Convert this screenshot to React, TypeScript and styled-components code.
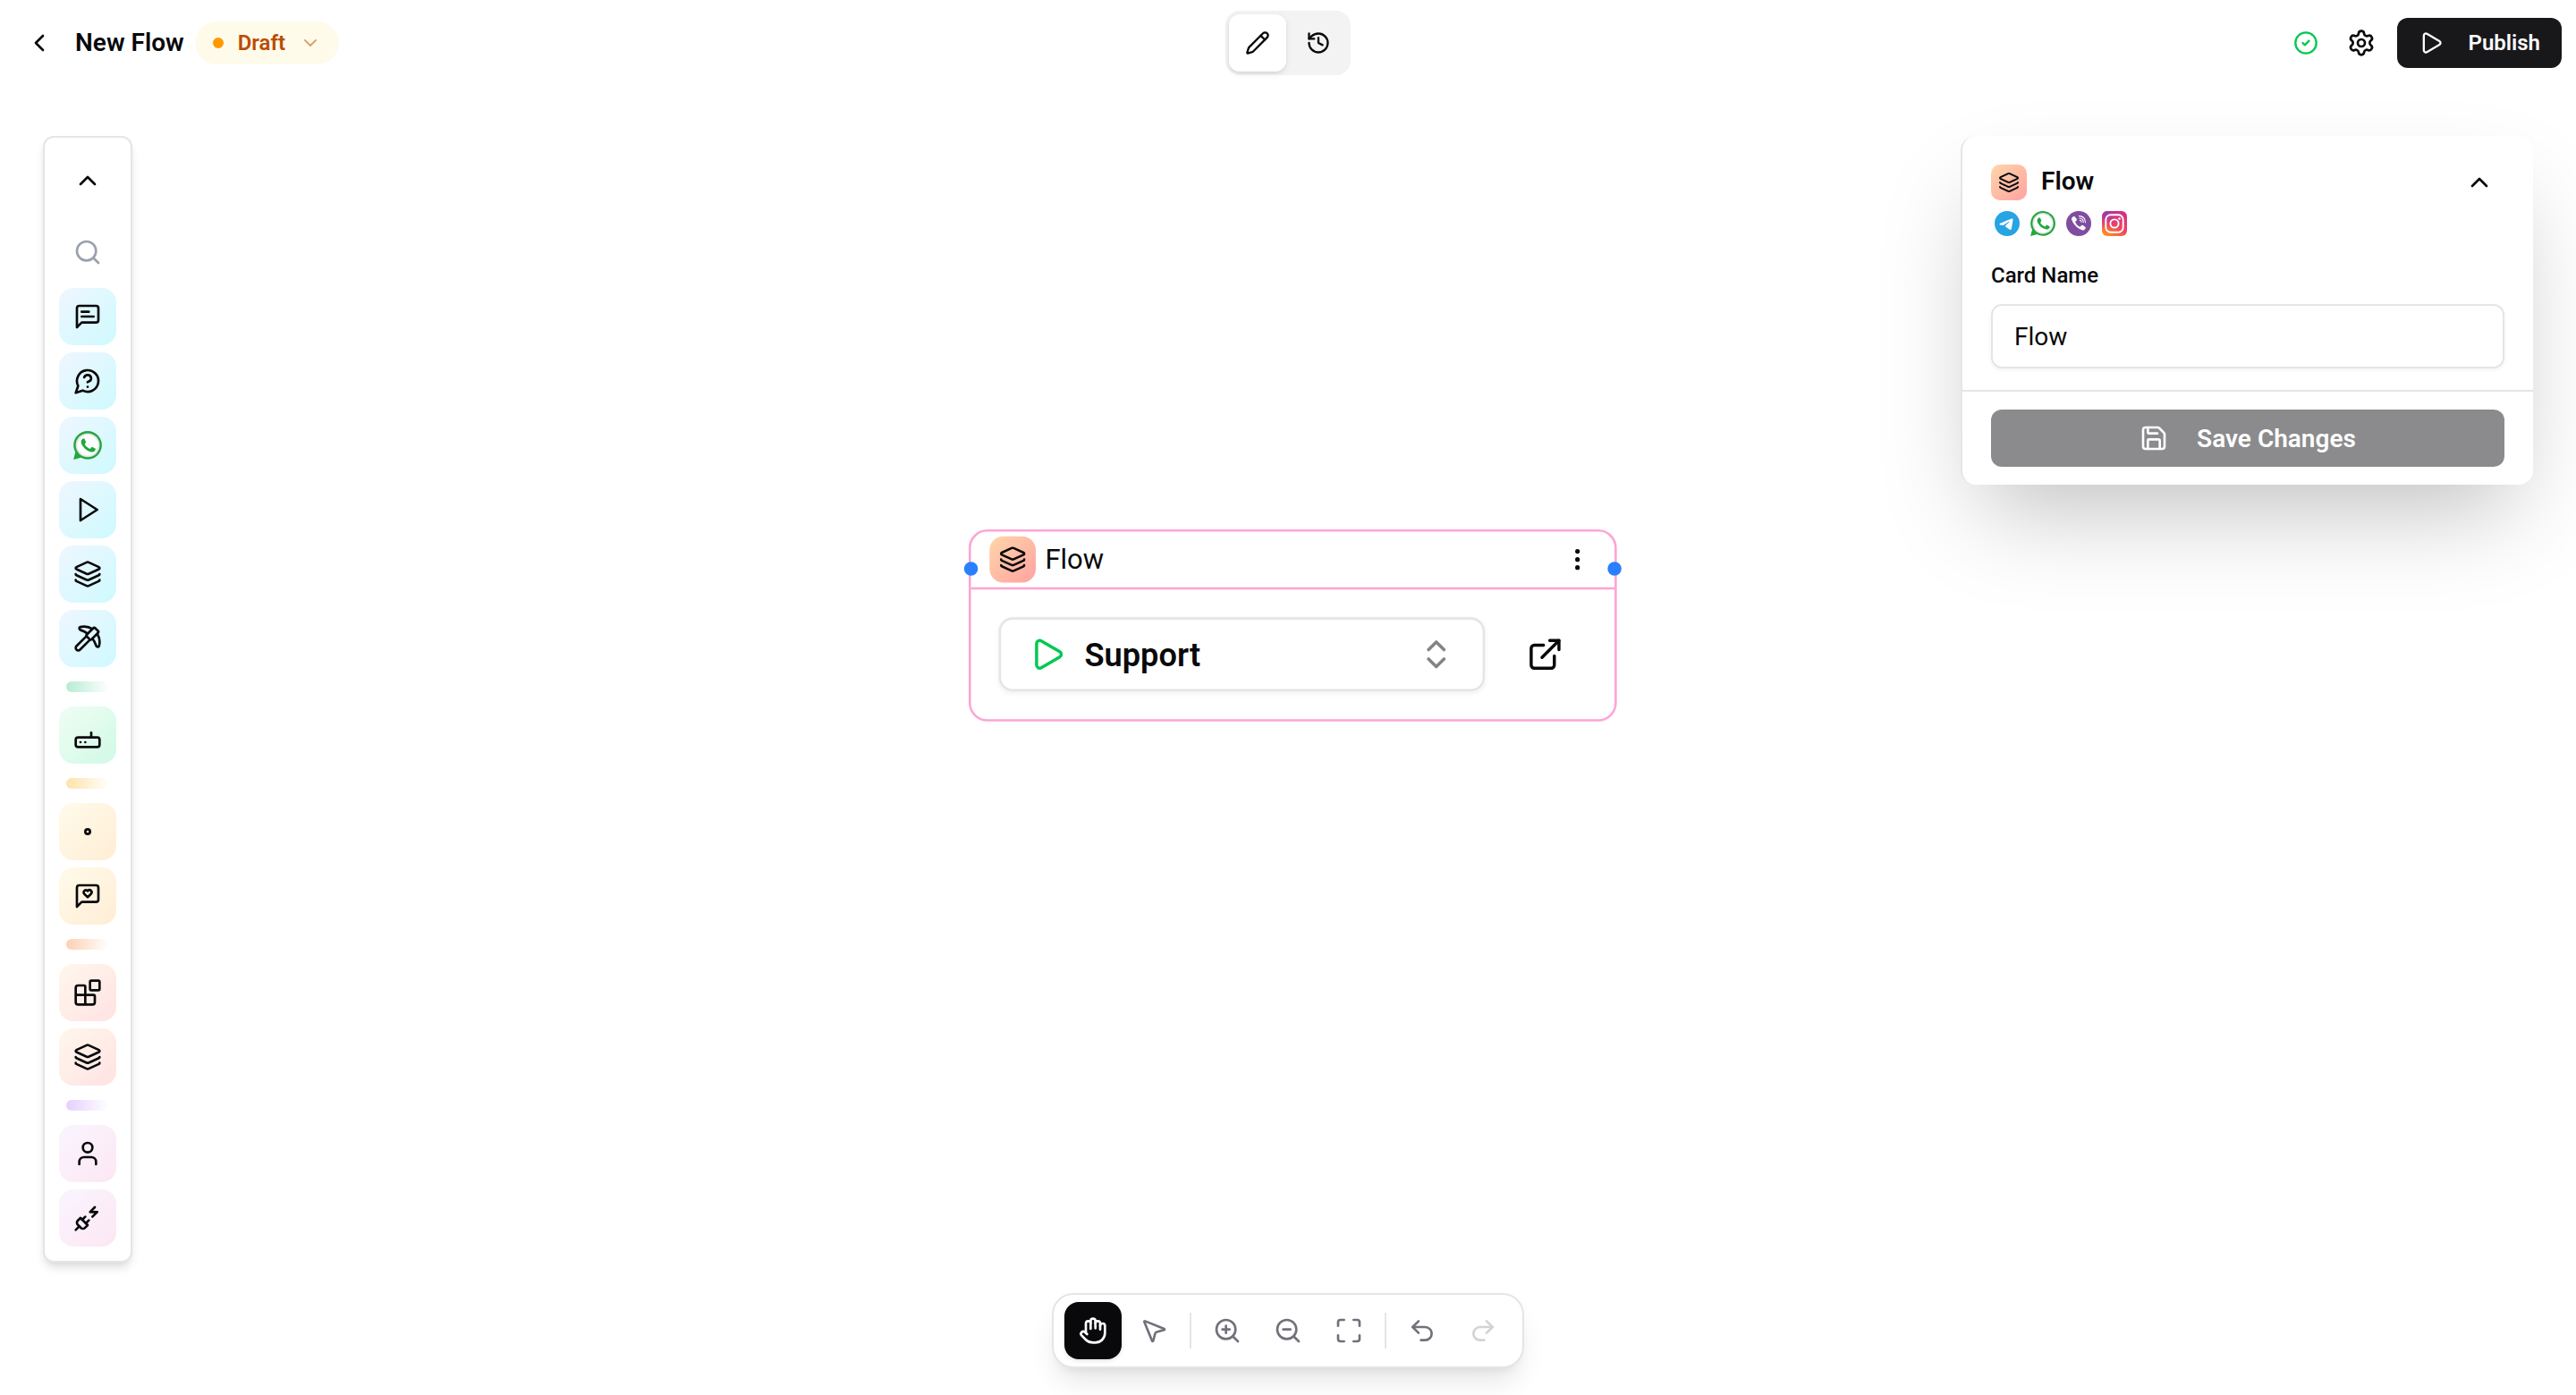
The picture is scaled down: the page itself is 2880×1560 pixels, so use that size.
import {
  Blocks,
  ChevronDown,
  ChevronLeft,
  ChevronUp,
  ChevronsUpDown,
  CircleCheck,
  EllipsisVertical,
  ExternalLink,
  Hand,
  History,
  Layers,
  Maximize,
  MousePointer2,
  Pencil,
  Pickaxe,
  Play,
  PlugZap,
  Redo2,
  Save,
  Search,
  Settings,
  Undo2,
  User,
  ZoomIn,
  ZoomOut,
} from 'lucide-react';
import { FC, ReactNode } from 'react';
import styled, { createGlobalStyle } from 'styled-components';

const GlobalStyle = createGlobalStyle`
  *, *::before, *::after {
    box-sizing: border-box;
  }

  body {
    margin: 0;
    background: #fff;
    color: #09090b;
    font-family: Roboto, 'Liberation Sans', sans-serif;
  }

  button, input {
    font: inherit;
    color: inherit;
    border: 0;
    padding: 0;
    background: none;
  }

  svg {
    display: block;
    flex-shrink: 0;
  }
`;

interface IGlyphProps {
  size?: number;
  children?: ReactNode;
}

const Glyph: FC<IGlyphProps> = ({ size = 32, children }) => (
  <svg
    width={size}
    height={size}
    viewBox="0 0 24 24"
    fill="none"
    stroke="currentColor"
    strokeWidth="2"
    strokeLinecap="round"
    strokeLinejoin="round"
  >
    {children}
  </svg>
);

const MessageText = () => (
  <Glyph>
    <path d="M21 15a2 2 0 0 1-2 2H7l-4 4V5a2 2 0 0 1 2-2h14a2 2 0 0 1 2 2z" />
    <path d="M13 8H7" />
    <path d="M17 12H7" />
  </Glyph>
);

const MessageQuestion = () => (
  <Glyph>
    <path d="M7.9 20A9 9 0 1 0 4 16.1L2 22Z" />
    <path d="M9.09 9a3 3 0 0 1 5.83 1c0 2-3 3-3 3" />
    <path d="M12 17h.01" />
  </Glyph>
);

const MessageHeart = () => (
  <Glyph>
    <path d="M21 15a2 2 0 0 1-2 2H7l-4 4V5a2 2 0 0 1 2-2h14a2 2 0 0 1 2 2z" />
    <path d="M14.8 7.5a1.84 1.84 0 0 0-2.6 0l-.2.3-.3-.3a1.84 1.84 0 1 0-2.4 2.8L12 13l2.7-2.7c.9-.9.8-2.1.1-2.8" />
  </Glyph>
);

const Triangle = () => (
  <Glyph>
    <polygon points="6 3 20 12 6 21 6 3" />
  </Glyph>
);

const Router = () => (
  <Glyph>
    <rect width="20" height="8" x="2" y="14" rx="2" />
    <path d="M6.01 18H6" />
    <path d="M10.01 18H10" />
    <path d="M15 10v4" />
  </Glyph>
);

const SmallDot = () => (
  <Glyph>
    <circle cx="12" cy="12" r="2" />
  </Glyph>
);

const WhatsApp: FC<{ size: number }> = ({ size }) => (
  <svg width={size} height={size} viewBox="0 0 24 24">
    <defs>
      <radialGradient id={`wa-${size}`}>
        <stop offset="0.8" stopColor="#fff" />
        <stop offset="1" stopColor="#d4d4d4" />
      </radialGradient>
    </defs>
    <path
      fill="#20a83c"
      d="M.057 24l1.687-6.163C.703 16.033.156 13.988.157 11.891.16 5.335 5.495 0 12.05 0c3.181.001 6.167 1.24 8.413 3.488 2.245 2.248 3.481 5.236 3.48 8.414-.003 6.557-5.338 11.892-11.893 11.892-1.99-.001-3.951-.5-5.688-1.448z"
    />
    <circle cx="12.05" cy="11.9" r="10.1" fill={`url(#wa-${size})`} />
    <path
      fill="#20a83c"
      d="M17.972 14.382c-.297-.149-1.758-.867-2.03-.967-.273-.099-.471-.148-.67.15-.197.297-.767.966-.94 1.164-.173.199-.347.223-.644.075-.297-.15-1.255-.463-2.39-1.475-.883-.788-1.48-1.761-1.653-2.059-.173-.297-.018-.458.13-.606.134-.133.298-.347.446-.52.149-.174.198-.298.298-.497.099-.198.05-.371-.025-.52-.075-.149-.669-1.612-.916-2.207-.242-.579-.487-.5-.669-.51-.173-.008-.371-.01-.57-.01-.198 0-.52.074-.792.372-.272.297-1.04 1.016-1.04 2.479 0 1.462 1.065 2.875 1.213 3.074.149.198 2.096 3.2 5.077 4.487.709.306 1.262.489 1.694.625.712.227 1.36.195 1.871.118.571-.085 1.758-.719 2.006-1.413.248-.694.248-1.289.173-1.413-.074-.124-.272-.198-.57-.347"
    />
  </svg>
);

const Telegram = () => (
  <svg width="28" height="28" viewBox="0 0 24 24">
    <circle cx="12" cy="12" r="12" fill="#26a4e3" />
    <path
      fill="#fff"
      d="M16.906 7.224c.1-.002.321.023.465.14a.506.506 0 0 1 .171.325c.016.093.036.306.02.472-.18 1.898-.962 6.502-1.36 8.627-.168.9-.499 1.201-.82 1.23-.696.065-1.225-.46-1.9-.902-1.056-.693-1.653-1.124-2.678-1.8-1.185-.78-.417-1.21.258-1.91.177-.184 3.247-2.977 3.307-3.23.007-.032.014-.15-.056-.212s-.174-.041-.249-.024c-.106.024-1.793 1.14-5.061 3.345-.48.33-.913.49-1.302.48-.428-.008-1.252-.241-1.865-.44-.752-.245-1.349-.374-1.297-.789.027-.216.325-.437.893-.663 3.498-1.524 5.83-2.529 6.998-3.014 3.332-1.386 4.025-1.627 4.476-1.635z"
    />
  </svg>
);

const Viber = () => (
  <svg width="28" height="28" viewBox="0 0 28 28" fill="none">
    <circle cx="14" cy="14" r="14" fill="#7f4da0" />
    <path
      fill="#fff"
      d="M7.9 6.2c.8-.5 1.5-.3 2 .3l1.7 2.3c.5.8.4 1.5-.3 2.1l-.8.7c-.3.3-.3.6-.2 1 .8 2.3 2.4 4 4.7 4.9.5.2.8.1 1.1-.3l.7-.9c.5-.6 1.2-.7 1.9-.3l2.5 1.7c.7.5.8 1.2.3 1.9-.7 1-1.6 2.3-3 2-6-2-10.3-6.2-12.4-12-.5-1.5.7-2.7 1.8-3.4z"
    />
    <path
      stroke="#fff"
      strokeWidth="1.1"
      strokeLinecap="round"
      d="M14.5 5.6c4.2.2 6.8 2.9 7 7.2M14.9 8c2.7.2 4.2 1.8 4.3 4.5M15.3 10.3c1.2.1 1.7.8 1.8 1.9"
    />
  </svg>
);

const Instagram = () => (
  <svg width="28" height="28" viewBox="0 0 28 28" fill="none">
    <defs>
      <linearGradient id="ig" x1="0.2" y1="1" x2="0.8" y2="0">
        <stop offset="0" stopColor="#fe8f1d" />
        <stop offset="0.45" stopColor="#f0455f" />
        <stop offset="1" stopColor="#d42d86" />
      </linearGradient>
      <radialGradient id="ig-top" cx="0.1" cy="0" r="0.75">
        <stop offset="0" stopColor="#8a3ab9" />
        <stop offset="1" stopColor="#c0309a" stopOpacity="0" />
      </radialGradient>
    </defs>
    <rect width="28" height="28" rx="6" fill="url(#ig)" />
    <rect width="28" height="28" rx="6" fill="url(#ig-top)" />
    <rect
      x="4.3"
      y="4.3"
      width="19.4"
      height="19.4"
      rx="5.4"
      stroke="#fff"
      strokeWidth="1.9"
    />
    <circle cx="14" cy="14" r="4.6" stroke="#fff" strokeWidth="1.9" />
    <circle cx="19.5" cy="8.5" r="1.3" fill="#fff" />
  </svg>
);

const Page = styled.div`
  display: flex;
  flex-direction: column;
  width: 2880px;
  height: 1560px;
  overflow: hidden;
`;

const Header = styled.header`
  display: grid;
  grid-template-columns: 1fr auto 1fr;
  align-items: center;
  height: 96px;
  padding: 0 16px;
`;

const HeaderSide = styled.div<{ $end?: boolean }>`
  display: flex;
  align-items: center;
  justify-content: ${({ $end }) => ($end ? 'flex-end' : 'flex-start')};
  padding-left: 12px;
`;

const Title = styled.h1`
  margin: 0 12px 0 24px;
  font-size: 28px;
  font-weight: 600;
  line-height: 40px;
`;

const Status = styled.button`
  display: flex;
  align-items: center;
  height: 48px;
  padding: 0 20px;
  gap: 16px;
  border-radius: 24px;
  background: #fffbeb;
  color: #bb4d00;
  font-size: 24px;
  font-weight: 600;

  &::before {
    content: '';
    width: 12px;
    height: 12px;
    border-radius: 50%;
    background: #fe9a00;
  }

  svg {
    opacity: 0.5;
  }
`;

const Tabs = styled.nav`
  display: flex;
  gap: 4px;
  padding: 4px;
  border-radius: 16px;
  background: #f3f3f3;
`;

const Tab = styled.button<{ $active?: boolean }>`
  display: grid;
  place-items: center;
  width: 64px;
  height: 64px;
  border-radius: 12px;
  background: ${({ $active }) => ($active ? '#fff' : 'transparent')};
  box-shadow: ${({ $active }) =>
    $active
      ? '0 2px 6px rgba(0, 0, 0, 0.1), 0 2px 4px -2px rgba(0, 0, 0, 0.1)'
      : 'none'};
`;

const HeaderActions = styled.div`
  display: flex;
  align-items: center;
  margin-right: 24px;
  gap: 32px;

  .saved {
    color: #00c951;
  }
`;

const PublishButton = styled.button`
  display: flex;
  align-items: center;
  justify-content: space-between;
  width: 184px;
  height: 56px;
  padding: 0 24px;
  border-radius: 12px;
  background: #18181b;
  color: #fafafa;
  font-size: 24px;
  font-weight: 600;
`;

const Workspace = styled.main`
  position: relative;
  display: grid;
  grid-template-columns: 1fr auto 1fr;
  align-items: start;
  flex: 1;
  padding: 56px 48px 30px;
`;

const Palette = styled.aside`
  display: flex;
  flex-direction: column;
  align-items: center;
  width: 100px;
  padding: 16px 0;
  gap: 8px;
  border: 2px solid #e5e5e5;
  border-radius: 12px;
  background: #fff;
  box-shadow:
    0 8px 12px -2px rgba(0, 0, 0, 0.1),
    0 4px 8px -4px rgba(0, 0, 0, 0.1);
`;

const PaletteAction = styled.button<{ $muted?: boolean }>`
  display: grid;
  place-items: center;
  width: 64px;
  height: 64px;
  margin-top: ${({ $muted }) => ($muted ? '8px' : 0)};
  color: ${({ $muted }) => ($muted ? '#99a1af' : 'inherit')};
`;

const PaletteItem = styled.button<{ $from: string; $to: string }>`
  display: grid;
  place-items: center;
  width: 64px;
  height: 64px;
  border-radius: 16px;
  background: linear-gradient(
    to bottom right,
    ${({ $from }) => $from},
    ${({ $to }) => $to}
  );
`;

const PaletteDivider = styled.div<{ $color: string }>`
  width: 48px;
  height: 12px;
  margin: 8px 0;
  border-radius: 6px;
  background: linear-gradient(
    to right,
    ${({ $color }) => $color},
    rgba(255, 255, 255, 0)
  );
`;

const CanvasNode = styled.section`
  position: absolute;
  left: 1083px;
  top: 496.3px;
  width: 560px;
  height: 166px;
  border: 2px solid #fda5d5;
  border-radius: 16px;
  background: #fff;
  transform: scale(1.294);
  transform-origin: 0 0;
`;

const NodeHandle = styled.span<{ $side: 'left' | 'right' }>`
  position: absolute;
  top: 26px;
  ${({ $side }) => $side}: -6px;
  width: 12px;
  height: 12px;
  border-radius: 50%;
  background: #2b7fff;
`;

const NodeHeader = styled.div`
  display: flex;
  align-items: center;
  height: 50px;
  padding: 0 20px 0 16px;
  gap: 8px;
  border-bottom: 2px solid #fda5d5;
  font-size: 24px;

  .menu {
    margin-left: auto;
  }
`;

const LayersBadge = styled.span<{ $radius: number }>`
  display: grid;
  place-items: center;
  width: 40px;
  height: 40px;
  border-radius: ${({ $radius }) => $radius}px;
  background: linear-gradient(to bottom right, #ffd6a8, #ffa2a2);
`;

const NodeBody = styled.div`
  display: flex;
  padding: 24px;
  gap: 16px;
`;

const FlowSelect = styled.button`
  display: flex;
  align-items: center;
  width: 420px;
  height: 64px;
  padding: 0 24px;
  gap: 16px;
  border: 2px solid #e5e5e5;
  border-radius: 12px;
  box-shadow: 0 2px 4px rgba(0, 0, 0, 0.05);
  font-size: 28px;
  font-weight: 600;

  .play {
    color: #00c951;
  }

  .arrows {
    margin-left: auto;
    opacity: 0.5;
  }
`;

const OpenFlow = styled.button`
  display: grid;
  place-items: center;
  width: 72px;
  height: 64px;
`;

const Toolbar = styled.div`
  display: flex;
  align-items: center;
  align-self: end;
  grid-column: 2;
  width: 528px;
  height: 84px;
  padding: 8px 12px;
  gap: 4px;
  border: 2px solid #e5e5e5;
  border-radius: 24px;
  background: #fff;
  box-shadow:
    0 20px 30px -6px rgba(0, 0, 0, 0.1),
    0 8px 12px -8px rgba(0, 0, 0, 0.1);
`;

const Tool = styled.button<{ $active?: boolean; $disabled?: boolean }>`
  display: grid;
  place-items: center;
  width: 64px;
  height: 64px;
  border-radius: 16px;
  background: ${({ $active }) => ($active ? '#09090b' : 'transparent')};
  color: ${({ $active }) => ($active ? '#fff' : '#71717b')};
  opacity: ${({ $disabled }) => ($disabled ? 0.3 : 1)};
  box-shadow: ${({ $active }) =>
    $active ? '0 2px 4px rgba(0, 0, 0, 0.1)' : 'none'};
`;

const ToolDivider = styled.span`
  width: 2px;
  height: 40px;
  margin: 0 4px;
  background: #e5e5e5;
`;

const Panel = styled.aside`
  justify-self: end;
  grid-column: 3;
  width: 640px;
  border-left: 2px solid #e5e5e5;
  border-radius: 16px;
  background: #fff;
  box-shadow: 0 50px 100px -24px rgba(0, 0, 0, 0.25);
`;

const PanelBody = styled.div`
  display: flex;
  flex-direction: column;
  height: 284px;
  padding: 32px 32px 0;
`;

const PanelHeading = styled.div`
  display: flex;
  align-items: center;
  gap: 16px;
  height: 40px;

  .toggle {
    margin: 0 12px 0 auto;
  }
`;

const PanelTitle = styled.h2`
  margin: 0;
  padding-bottom: 2px;
  font-size: 28px;
  font-weight: 600;
  line-height: 38px;
`;

const Channels = styled.div`
  display: flex;
  gap: 12px;
  padding: 12px 4px 0;
`;

const FieldLabel = styled.label`
  margin-top: 28px;
  font-size: 24px;
  font-weight: 500;
  line-height: 32px;
`;

const FieldInput = styled.input`
  width: 100%;
  height: 72px;
  margin-top: 16px;
  padding: 0 24px;
  border: 2px solid #e5e5e5;
  border-radius: 12px;
  box-shadow: 0 2px 4px rgba(0, 0, 0, 0.05);
  font-size: 28px;
`;

const PanelFooter = styled.div`
  padding: 20px 32px;
  border-top: 2px solid #e5e5e5;
`;

const SaveButton = styled.button`
  display: flex;
  align-items: center;
  justify-content: center;
  gap: 32px;
  width: 100%;
  height: 64px;
  border-radius: 12px;
  background: #8b8b8d;
  color: #fdfdfd;
  font-size: 28px;
  font-weight: 600;
`;

const groups: {
  from: string;
  to: string;
  divider?: string;
  icons: ReactNode[];
}[] = [
  {
    from: '#eff6ff',
    to: '#cefafe',
    icons: [
      <MessageText />,
      <MessageQuestion />,
      <WhatsApp size={32} />,
      <Triangle />,
      <Layers size={32} />,
      <Pickaxe size={32} />,
    ],
  },
  {
    from: '#f0fdf4',
    to: '#d0fae5',
    divider: '#b7ebd4',
    icons: [<Router />],
  },
  {
    from: '#fffbeb',
    to: '#ffedd4',
    divider: '#fee2a8',
    icons: [<SmallDot />, <MessageHeart />],
  },
  {
    from: '#fff7ed',
    to: '#ffe2e2',
    divider: '#fecfb0',
    icons: [<Blocks size={32} />, <Layers size={32} />],
  },
  {
    from: '#faf5ff',
    to: '#fce7f3',
    divider: '#e6cfff',
    icons: [<User size={32} />, <PlugZap size={32} />],
  },
];

const App: FC = () => (
  <>
    <GlobalStyle />
    <Page>
      <Header>
        <HeaderSide>
          <ChevronLeft size={32} />
          <Title>New Flow</Title>
          <Status>
            Draft
            <ChevronDown size={24} />
          </Status>
        </HeaderSide>

        <Tabs>
          <Tab $active>
            <Pencil size={28} />
          </Tab>
          <Tab>
            <History size={28} />
          </Tab>
        </Tabs>

        <HeaderSide $end>
          <HeaderActions>
            <CircleCheck className="saved" size={28} />
            <Settings size={32} />
          </HeaderActions>
          <PublishButton>
            <Play size={28} />
            Publish
          </PublishButton>
        </HeaderSide>
      </Header>

      <Workspace>
        <Palette>
          <PaletteAction>
            <ChevronUp size={32} />
          </PaletteAction>
          <PaletteAction $muted>
            <Search size={32} />
          </PaletteAction>
          {groups.map(({ from, to, divider, icons }) => [
            divider && <PaletteDivider key={divider} $color={divider} />,
            ...icons.map((icon, index) => (
              <PaletteItem key={from + index} $from={from} $to={to}>
                {icon}
              </PaletteItem>
            )),
          ])}
        </Palette>

        <CanvasNode>
          <NodeHeader>
            <LayersBadge $radius={12}>
              <Layers size={24} />
            </LayersBadge>
            Flow
            <EllipsisVertical className="menu" size={24} />
          </NodeHeader>
          <NodeBody>
            <FlowSelect>
              <Play className="play" size={32} />
              Support
              <ChevronsUpDown className="arrows" size={32} />
            </FlowSelect>
            <OpenFlow>
              <ExternalLink size={32} />
            </OpenFlow>
          </NodeBody>
          <NodeHandle $side="left" />
          <NodeHandle $side="right" />
        </CanvasNode>

        <Toolbar>
          <Tool $active>
            <Hand size={32} />
          </Tool>
          <Tool>
            <MousePointer2 size={32} />
          </Tool>
          <ToolDivider />
          <Tool>
            <ZoomIn size={32} />
          </Tool>
          <Tool>
            <ZoomOut size={32} />
          </Tool>
          <Tool>
            <Maximize size={32} />
          </Tool>
          <ToolDivider />
          <Tool>
            <Undo2 size={32} />
          </Tool>
          <Tool $disabled>
            <Redo2 size={32} />
          </Tool>
        </Toolbar>

        <Panel>
          <PanelBody>
            <PanelHeading>
              <LayersBadge $radius={10}>
                <Layers size={24} />
              </LayersBadge>
              <PanelTitle>Flow</PanelTitle>
              <ChevronUp className="toggle" size={32} />
            </PanelHeading>
            <Channels>
              <Telegram />
              <WhatsApp size={28} />
              <Viber />
              <Instagram />
            </Channels>
            <FieldLabel htmlFor="card-name">Card Name</FieldLabel>
            <FieldInput id="card-name" defaultValue="Flow" />
          </PanelBody>
          <PanelFooter>
            <SaveButton>
              <Save size={32} />
              Save Changes
            </SaveButton>
          </PanelFooter>
        </Panel>
      </Workspace>
    </Page>
  </>
);

export default App;
